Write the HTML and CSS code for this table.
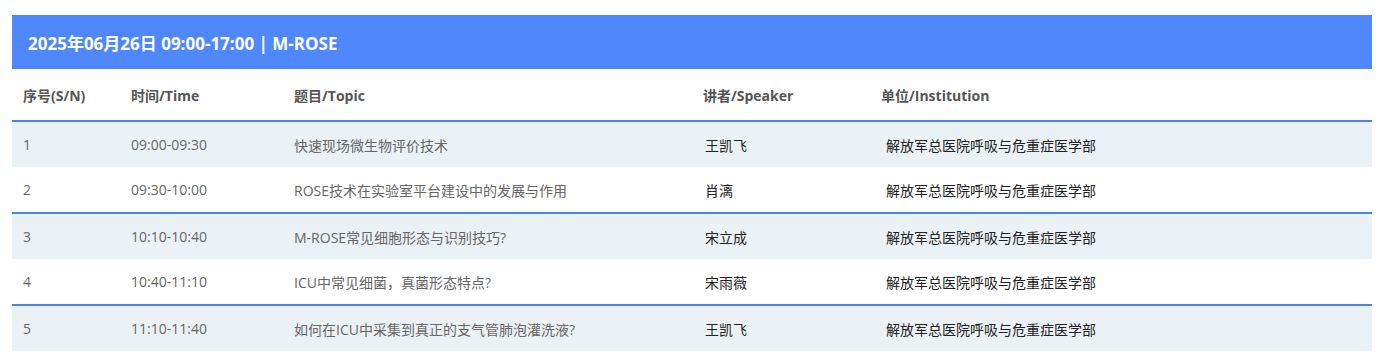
FILE: index.html
```html
<!DOCTYPE html>
<html lang="zh-CN">
<head>
<meta charset="utf-8">
<title>M-ROSE</title>
<link rel="stylesheet" href="styles.css">
</head>
<body>
<div class="wrap">
  <div class="band">2025年06月26日 09:00-17:00 | M-ROSE</div>
  <table class="sched">
    <colgroup>
      <col class="c1"><col class="c2"><col class="c3"><col class="c4"><col class="c5">
    </colgroup>
    <thead>
      <tr><th>序号(S/N)</th><th>时间/Time</th><th>题目/Topic</th><th>讲者/Speaker</th><th>单位/Institution</th></tr>
    </thead>
    <tbody>
      <tr class="alt"><td>1</td><td>09:00-09:30</td><td>快速现场微生物评价技术</td><td class="sp">王凯飞</td><td class="in">解放军总医院呼吸与危重症医学部</td></tr>
      <tr><td>2</td><td>09:30-10:00</td><td>ROSE技术在实验室平台建设中的发展与作用</td><td class="sp">肖漓</td><td class="in">解放军总医院呼吸与危重症医学部</td></tr>
      <tr class="alt sep"><td>3</td><td>10:10-10:40</td><td>M-ROSE常见细胞形态与识别技巧?</td><td class="sp">宋立成</td><td class="in">解放军总医院呼吸与危重症医学部</td></tr>
      <tr><td>4</td><td>10:40-11:10</td><td>ICU中常见细菌，真菌形态特点?</td><td class="sp">宋雨薇</td><td class="in">解放军总医院呼吸与危重症医学部</td></tr>
      <tr class="alt sep"><td>5</td><td>11:10-11:40</td><td>如何在ICU中采集到真正的支气管肺泡灌洗液?</td><td class="sp">王凯飞</td><td class="in">解放军总医院呼吸与危重症医学部</td></tr>
    </tbody>
  </table>
</div>
</body>
</html>
```
FILE: styles.css
```css
html, body {
  margin: 0;
  padding: 0;
  background: #ffffff;
}
body {
  font-family: "Open Sans", "Noto Sans CJK SC", sans-serif;
}
.wrap {
  width: 1360px;
  padding: 15px 0 0 12px;
}
.band {
  height: 54px;
  box-sizing: border-box;
  padding-left: 16px;
  display: flex;
  align-items: center;
  background: #4f88fc;
  color: #ffffff;
  font-size: 17px;
  font-weight: 700;
}
.sched {
  width: 1360px;
  border-collapse: collapse;
  table-layout: fixed;
}
.c1 { width: 108px; }
.c2 { width: 163px; }
.c3 { width: 409px; }
.c4 { width: 178px; }
.c5 { width: 502px; }
.sched th {
  height: 51px;
  padding: 0 0 0 11px;
  text-align: left;
  font-size: 14px;
  font-weight: 700;
  color: #555555;
  border-bottom: 2px solid #4a84ea;
}
.sched td {
  height: 45px;
  padding: 0 0 0 11px;
  font-size: 14px;
  color: #666666;
  vertical-align: middle;
  white-space: nowrap;
}
.sched tr.alt td {
  background: #ebf2f6;
}
.sched tr.sep td {
  border-top: 2px solid #4a84ea;
}
.sched td.sp {
  color: #222222;
  padding-left: 13px;
}
.sched td.in {
  color: #222222;
  padding-left: 16px;
}
```
